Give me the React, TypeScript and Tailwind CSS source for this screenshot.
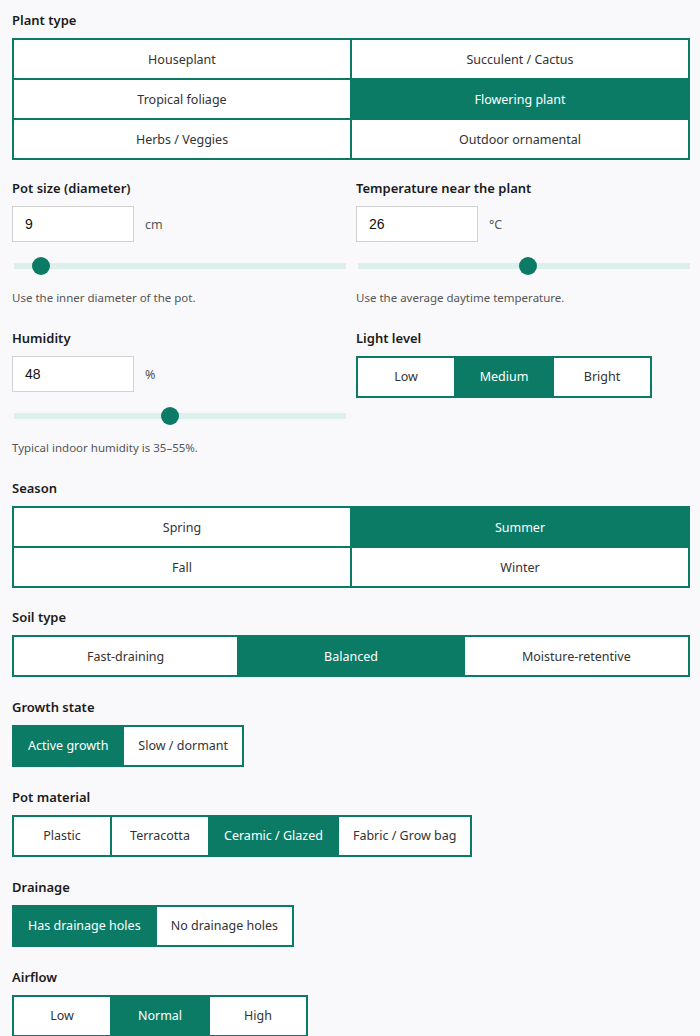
import { useState } from 'react';

const TEAL = 'bg-[#0b7b66]';

function Label({ children }: { children: React.ReactNode }) {
    return <div className="text-[13px] leading-[18px] font-semibold text-[#1b1b1b] mb-[9px]">{children}</div>;
}

function ChoiceGrid({ options, selected, cols }: { options: string[]; selected: string; cols: 2 | 3 }) {
    return (
        <div className={`grid ${cols === 2 ? 'grid-cols-2' : 'grid-cols-3'} gap-[2px] p-[2px] ${TEAL}`}>
            {options.map((o) => (
                <div
                    key={o}
                    className={`h-[38px] pt-[2px] flex items-center justify-center text-[12.5px] ${
                        o === selected ? 'bg-[#0b7b66] text-white' : 'bg-white text-[#333]'
                    }`}
                >
                    {o}
                </div>
            ))}
        </div>
    );
}

function Segmented({ options, selected }: { options: string[]; selected: string }) {
    return (
        <div className={`inline-flex gap-[2px] p-[2px] ${TEAL}`}>
            {options.map((o) => (
                <div
                    key={o}
                    className={`h-[38px] pt-[1px] min-w-[96px] px-[14px] flex items-center justify-center whitespace-nowrap text-[12.5px] ${
                        o === selected ? 'bg-[#0b7b66] text-white' : 'bg-white text-[#333]'
                    }`}
                >
                    {o}
                </div>
            ))}
        </div>
    );
}

function NumberSlider({
    label,
    value,
    unit,
    pos,
    hint,
}: {
    label: string;
    value: string;
    unit: string;
    pos: number;
    hint: string;
}) {
    return (
        <div>
            <Label>{label}</Label>
            <div className="flex items-center gap-[11px]">
                <div className="w-[122px] h-[36px] bg-white border border-[#d2d2d2] flex items-center pl-3 font-['Liberation_Sans',sans-serif] text-[14px] text-[#111]">
                    {value}
                </div>
                <span className="text-[12.5px] text-[#555] pt-[2px]">{unit}</span>
            </div>
            <div className="mt-[15px] pl-[2px]">
                <div className="relative h-[18px] flex items-center">
                    <div className="h-[6px] w-full bg-[#dcefea]" />
                    <div
                        className="absolute top-0 w-[18px] h-[18px] rounded-full bg-[#0b7b66]"
                        style={{ left: `calc(${pos} * (100% - 18px))` }}
                    />
                </div>
            </div>
            <div className="mt-[13px] text-[11.5px] leading-5 text-[#555]">{hint}</div>
        </div>
    );
}

export default function App() {
    const [plant] = useState('Flowering plant');

    return (
        <main className="min-h-screen bg-[#f9f9fb] pl-3 pr-[10px] pt-[11px] pb-6 font-['Noto_Sans',sans-serif]">
            <div className="flex flex-col">
                <section>
                    <Label>Plant type</Label>
                    <ChoiceGrid
                        cols={2}
                        selected={plant}
                        options={[
                            'Houseplant',
                            'Succulent / Cactus',
                            'Tropical foliage',
                            'Flowering plant',
                            'Herbs / Veggies',
                            'Outdoor ornamental',
                        ]}
                    />
                </section>

                <section className="mt-[19px] grid grid-cols-2 gap-x-[10px]">
                    <NumberSlider
                        label="Pot size (diameter)"
                        value="9"
                        unit="cm"
                        pos={0.058}
                        hint="Use the inner diameter of the pot."
                    />
                    <NumberSlider
                        label="Temperature near the plant"
                        value="26"
                        unit="°C"
                        pos={0.513}
                        hint="Use the average daytime temperature."
                    />
                </section>

                <section className="mt-[21px] grid grid-cols-2 gap-x-[10px]">
                    <NumberSlider
                        label="Humidity"
                        value="48"
                        unit="%"
                        pos={0.468}
                        hint="Typical indoor humidity is 35–55%."
                    />
                    <div>
                        <Label>Light level</Label>
                        <Segmented options={['Low', 'Medium', 'Bright']} selected="Medium" />
                    </div>
                </section>

                <section className="mt-[21px]">
                    <Label>Season</Label>
                    <ChoiceGrid cols={2} selected="Summer" options={['Spring', 'Summer', 'Fall', 'Winter']} />
                </section>

                <section className="mt-[20px]">
                    <Label>Soil type</Label>
                    <ChoiceGrid cols={3} selected="Balanced" options={['Fast-draining', 'Balanced', 'Moisture-retentive']} />
                </section>

                <section className="mt-[21px]">
                    <Label>Growth state</Label>
                    <Segmented options={['Active growth', 'Slow / dormant']} selected="Active growth" />
                </section>

                <section className="mt-[21px]">
                    <Label>Pot material</Label>
                    <Segmented
                        options={['Plastic', 'Terracotta', 'Ceramic / Glazed', 'Fabric / Grow bag']}
                        selected="Ceramic / Glazed"
                    />
                </section>

                <section className="mt-[21px]">
                    <Label>Drainage</Label>
                    <Segmented options={['Has drainage holes', 'No drainage holes']} selected="Has drainage holes" />
                </section>

                <section className="mt-[21px]">
                    <Label>Airflow</Label>
                    <Segmented options={['Low', 'Normal', 'High']} selected="Normal" />
                </section>
            </div>
        </main>
    );
}
